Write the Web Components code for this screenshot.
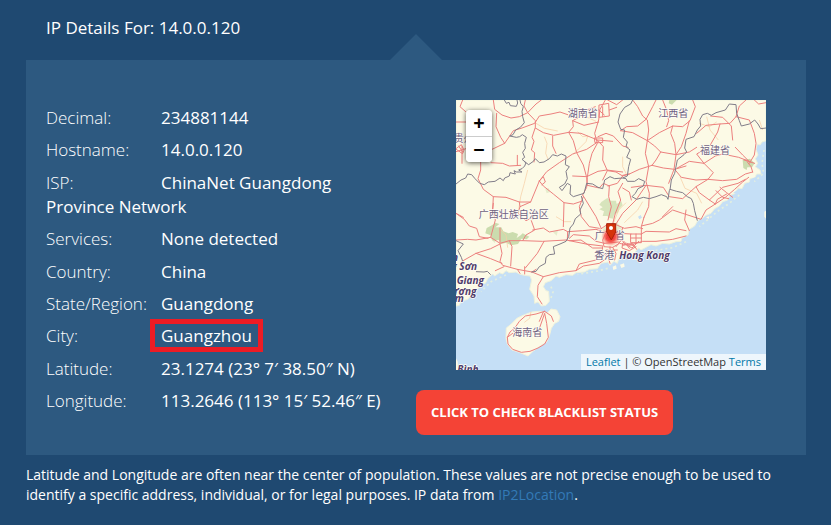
<!DOCTYPE html>
<html lang="en">
<head>
<meta charset="utf-8">
<title>IP Details</title>
<style>
  body { margin: 0; min-height: 100vh; background: #1f4971; color: #fff; font: 17px/24px "Open Sans", "Noto Sans", "Noto Sans CJK SC", sans-serif; }
</style>
</head>
<body>
<ip-page>
  <span slot="title">IP Details For: 14.0.0.120</span>
  <ip-fields slot="fields">
    <ip-field label="Decimal:">234881144</ip-field>
    <ip-field label="Hostname:">14.0.0.120</ip-field>
    <ip-field label="ISP:">ChinaNet Guangdong Province Network</ip-field>
    <ip-field label="Services:">None detected</ip-field>
    <ip-field label="Country:">China</ip-field>
    <ip-field label="State/Region:">Guangdong</ip-field>
    <ip-field label="City:" marked>Guangzhou</ip-field>
    <ip-field label="Latitude:">23.1274 (23° 7′ 38.50″ N)</ip-field>
    <ip-field label="Longitude:">113.2646 (113° 15′ 52.46″ E)</ip-field>
  </ip-fields>
  <ip-map slot="map"></ip-map>
  <blacklist-button slot="action">CLICK TO CHECK BLACKLIST STATUS</blacklist-button>
  <ip-note slot="note"></ip-note>
</ip-page>

<template id="ip-page">
  <style>
    :host { display: block; padding: 16px 25px 20px 26px; }
    h1 { margin: 0 20px 20px; font-size: 17px; line-height: 24px; font-weight: 400; }
    main { position: relative; display: grid; grid-template-columns: 1fr 1fr; padding: 40px 20px 20px; background: #2d5980; }
    main::before { content: ""; position: absolute; bottom: 100%; left: 50%; margin-left: -26px; border: 26px solid transparent; border-top: 0; border-bottom-color: #2d5980; }
    .right { display: flex; flex-direction: column; align-items: flex-start; gap: 20px; }
    ::slotted(ip-map) { align-self: stretch; margin: 0 20px 0 40px; }
  </style>
  <h1><slot name="title"></slot></h1>
  <main>
    <slot name="fields"></slot>
    <div class="right"><slot name="map"></slot><slot name="action"></slot></div>
  </main>
  <slot name="note"></slot>
</template>

<template id="ip-fields">
  <style>:host { display: flex; flex-direction: column; justify-content: space-between; padding: 6px 20px 22px 0; }</style>
  <slot></slot>
</template>

<template id="ip-field">
  <style>
    :host { display: block; }
    .label { display: inline-block; width: 115px; font-weight: 300; }
    :host([marked]) .value { margin: 0 -6px; padding: 0 6px; outline: 5px solid #ed1c24; }
  </style>
  <span class="label"></span><span class="value"><slot></slot></span>
</template>

<template id="blacklist-button">
  <style>
    :host { display: block; }
    button { padding: 12px 15px; border: 0; border-radius: 8px; background: #f44336; color: #fff; font: 700 13px/21px "Open Sans", sans-serif; cursor: pointer; }
  </style>
  <button type="button"><slot></slot></button>
</template>

<template id="ip-note">
  <style>
    :host { display: block; padding-top: 10px; font-size: 14px; line-height: 20px; }
    p { margin: 0; }
    a { color: #337ab7; text-decoration: none; }
  </style>
  <p>Latitude and Longitude are often near the center of population. These values are not precise enough to be used to identify a specific address, individual, or for legal purposes. IP data from <a href="#">IP2Location</a>.</p>
</template>

<template id="ip-map">
  <style>
    :host { display: block; position: relative; aspect-ratio: 31 / 27; overflow: hidden; background: #c5dff6; color: #333; }
    svg { display: block; width: 100%; height: 100%; }
    .zoom { position: absolute; left: 10px; top: 10px; display: flex; flex-direction: column; width: 26px; border-radius: 4px; overflow: hidden; box-shadow: 0 1px 5px rgba(0,0,0,.65); }
    .zoom button { height: 26px; padding: 0; border: 0; background: #fff; color: #000; font: 700 20px/26px "Open Sans", sans-serif; cursor: pointer; }
    .zoom button + button { border-top: 1px solid #ccc; line-height: 24px; }
    .credit { position: absolute; right: 0; bottom: 0; padding: 0 5px; background: rgba(255,255,255,.7); font-size: 11px; line-height: 16px; white-space: nowrap; }
    a { color: #0078a8; text-decoration: none; }
  </style>
  <svg viewBox="0 0 930 810" role="img" aria-label="Map of southern China with a pin on Guangzhou">
    <path fill="#fcfae6" stroke="#eef2dc" stroke-width="3" d="M0 0H930V122L918 126 912 135 904 132 900 148 906 165 898 176 905 190 898 200 912 210 915 222 902 222 896 234 882 236 880 246 866 250 858 266 846 264 838 280 822 286 815 300 800 305 790 318 776 326 765 340 750 346 740 354 725 362 716 378 700 388 696 405 678 414 675 424 660 425 640 432 620 430 600 438 585 434 570 442 555 450 548 444 532 462 520 458 510 470 500 462 488 478 484 490 474 484 462 496 456 486 435 490 424 506 400 508 385 516 360 518 350 526 330 524 310 532 300 528 285 542 268 548 262 560 270 572 278 574 280 604 270 616 256 618 246 606 236 610 234 588 221 568 227 540 222 528 205 526 190 522 180 516 160 518 150 512 140 522 130 518 116 528 110 522 95 536 88 550 75 552 60 575 50 580 35 598 15 604 10 616 0 618Z"/>
    <path fill="#fcfae6" stroke="#f2f3dd" stroke-width="3" d="M285 627L302 630 312 650 308 664 296 670 286 685 280 708 272 726 250 740 232 753 216 768 190 757 168 750 154 732 150 715 151 684 166 672 184 654 206 644 228 636 250 634 275 638Z"/>
    <path fill="#fcfae6" d="M0 775l5 10 1 25H0zM470 500l10-4 2 10-10 4zM492 494l12-4 2 10-10 4zM750 352l10-3-2 8zM925 335l5-3v24l-5-6z"/>
    <path fill="none" stroke="#e3efdf" stroke-width="5" stroke-dasharray="6 9" d="M924 150l-6 40 5 30-28 25M850 285l-30 25-30 20-60 50M690 425l-40 18-60 10-50 12M455 505l-30 8-60 10M285 560l6 16-6 18M150 525l-45 20-30 30"/>
    <g fill="#c5dff6"><path d="M546 350l8-5 4 8-8 5zM885 236l18-6-5 8zM832 278l16-10-6 14z"/></g>
    <g fill="#cbdcae">
      <path opacity=".75" d="M436 306l18-12 10 8 16 0 2 10 14-8 4 12-10 10-4 12-12 6-2 12-12-2-6-6-14 0 4-14-14-6 10-6-10-8z"/>
      <path d="M860 180l22-4 14 14-8 12-14 0-2 8-10-6z"/>
      <path d="M92 384l16-8 10-8 12 4-12 10 18 0 6 12 16 6 12-4 16 6-4 12 12-8 6-6 20 10-8 8-16-2-10 16-20 4-16-8-14 4-8-12-18 2-6-16-16-6z"/>
      <path d="M640 0l22 0-14 14-10-4z"/>
      <path opacity=".45" d="M268 268l10-4 4 12-10 4zM440 388l14-16 30-4 14 20-6 12h-50zM100 410l24 5-8 14zM290 395l16-4-4 16z"/>
    </g>
    <g fill="none" stroke="#f7cda4" stroke-width="3" stroke-linejoin="round" opacity=".7">
      <path d="M215 210L205 250 194 290 188 330M365 95L380 110 395 108 390 125 365 150 352 162M240 70l25 15 40 8M300 350l25 15 20 0M470 375L488 330 510 308M560 305L545 330 505 368M752 50l10 40 25 30M672 230l15 35 35 15 15 30M130 385l20 20 5 38M225 635l-4 20-16 12M265 110l8 20-4 30 8 20M370 20l20 30 30 14M500 170l0 30 12 24M730 70l30 10 22-14M910 60l10 30"/>
    </g>
    <g fill="none" stroke="#ec807e" stroke-width="3" stroke-linejoin="round" stroke-linecap="round">
      <path d="M112 0L116 28 138 45 165 54 190 50 215 38 240 12 256 0M122 40L120 80 134 112 146 130 172 92 198 84 236 70 250 48 285 42 312 36 335 44M146 130L104 150M208 0L204 18 215 38 238 62 238 82 228 112 234 124 226 150 236 158 234 186M238 84L262 98 293 106 338 97 375 100 425 120 470 124M290 108L290 138 300 160M338 97L352 122 362 158 382 195 392 232 394 256M338 97L352 80 350 62 372 50 392 30 418 20M350 62L384 76 428 66M20 0L12 20 30 36M0 66H30M18 140V190M0 155L30 146M74 186V210L66 236 82 268 112 290 150 292 190 306 224 306 250 243 272 215 310 188 350 162 392 148 425 126M250 243L262 258 292 282 324 308 322 380M250 243L262 230 268 246 258 254M112 290L110 330 118 360 104 412M112 310L108 345M190 306L192 320 224 306M192 320L186 340 210 362 234 350M324 308L352 312 376 304M350 228L392 230 426 214 452 210 500 216M105 188L140 190 160 198 194 196M184 166V194M0 340L25 358 40 378 62 385 70 410 96 415"/>
      <path d="M448 0L432 28 428 60 416 100 424 130 408 160 400 190 394 232 392 262 380 285M424 120L442 140 440 180 454 212 440 240M426 110L450 100 472 108 500 138 516 142M416 114h24v14h-22zM430 15L458 10 460 48 430 52zM440 20v30M455 0L482 14 500 0M460 30L482 22M428 30L445 45M382 290L370 320 376 350 400 380 430 385M394 256L430 264 442 250 460 258 458 290 466 320 456 360M500 250L486 275 494 300 478 340 470 372M500 228L484 250 456 258M500 264L520 276 526 300"/>
      <path d="M494 92L530 98 574 122 610 98 650 78 680 80 702 62 718 20 710 0M494 92L512 80 545 78 570 58 590 20 600 0M530 0L545 20 560 48 574 60 578 90 574 122 568 160 578 200 570 245 580 280 578 320 564 352M574 122L596 138 614 156 660 164 700 156 722 142M614 156L600 180 588 196 550 208 520 222 500 226M588 196L622 204 656 208 690 198M650 78L644 100 656 130 660 164 654 208 638 250M620 0L632 30 638 62 632 80M700 62L690 100 676 140 660 164M520 222L500 228 480 216 455 212M656 208L676 232 720 240 756 238 772 218 744 190 700 184 664 204M722 100L750 76 790 72 822 70 840 50 850 18 870 0M744 190L722 162 760 140 785 96 792 72M764 48L800 52 826 78 830 120M744 190L778 168 800 162 848 172 885 186M756 238L800 242 842 238 868 222 890 216M756 238L720 260 730 278 760 300 778 312 808 292 836 268 860 246 878 232M760 300L800 262 846 250 868 238M778 312L784 298 812 282M720 260L680 296 640 290 622 262 570 256 526 262M840 50L880 60 895 100 900 130 895 165 880 190M895 0L908 12 930 8M838 142L860 165 880 185M890 216L885 200 874 186M864 180L896 190M778 312L750 330 735 358 680 340 650 330 610 360 590 370 556 378M690 330L686 360 700 392M650 320L620 350M780 272L800 292 818 296M792 262L812 278 830 292"/>
      <path d="M0 420L35 418 60 420 104 412 132 430 160 422 200 422 260 424 330 420 390 432 440 438M18 484L60 460 104 446 132 432 138 460 132 484 140 496 184 508 228 516 262 530 310 518 360 512 382 498 430 490 450 476M60 460L104 476 138 490M160 422L168 440 164 498M264 424L244 460 208 504M132 384V430M184 508L192 520M206 500V522M228 516L240 508M262 530L246 556 244 590 258 612M230 390L262 384 280 396 322 388 335 395 334 418M226 362L236 390 210 405 200 422M335 395L380 392 420 388 450 398M340 415L352 404 400 408 420 424 446 430M340 422L375 420 410 444 440 444M360 512L370 492 420 480 440 465M0 340L22 352M118 512L144 500"/>
      <path d="M266 634L240 642 208 648 190 664 178 682 162 696 154 712 156 732 170 748 196 757 222 754 246 744 266 732 277 712 272 670 266 640 252 680M266 634L286 648 292 664M262 636L250 664M154 712L170 700"/>
      <path d="M450 398L440 420 444 440 470 442 490 430 520 436 560 424 600 424 650 418 690 408M430 390L450 376 480 374 505 385 540 380 560 386M500 384L492 408 504 430 528 444 548 424M525 402H556V428H525zM540 402V428M525 414H556M490 400L525 402M556 402L570 394 640 396 660 386 690 392M440 440L438 458 456 470 462 490M470 442L480 460 476 480M500 430L498 444 520 452 540 440M505 425L520 445M512 430L535 438M446 430L490 426M450 450L484 450M462 440V468M480 440L500 416M500 436L530 430 542 448M570 256L540 300 500 340 480 372M564 352L556 380 556 402M380 285L420 350 436 386"/>
      <path d="M0 146L16 134 24 150 20 160zM8 138L20 156"/>
    </g>
    <g fill="none" stroke="#817d89" stroke-width="3" stroke-linejoin="round">
      <path d="M145 0l6 10 8-3 4 10 18 2 4-10-2-9M192 0l2 10 8 10-4 14 2 16 5 18-12 14-14 8-8 14-10 4 20 4 10-2 8-6 12 8-5 18 2 15-8 12 6 15-8 6 12 10-4 10-8 8-10 4 10 6-16 0-8-4 4 10-16-4-2 10-14 6-4 8-10-8-15 10-20 2-12 8-14-4-14-14-10-12-12-2-6 12-14 6-15 12"/>
      <path d="M204 184L218 194 232 184 238 176 250 188 264 186 280 176 290 164 304 168 316 162 330 168 328 194 340 200 330 214 334 236 326 252 310 262 318 272 334 250 344 256 342 282 352 290 384 280 392 250 410 252 426 262 440 266 446 240 462 230 476 236 500 234"/>
      <path d="M376 288L382 310 372 330 374 342 358 356 352 372 342 384 338 410 330 424 312 432 292 440 296 462 280 464 270 472 268 490 250 500 240 514 226 516"/>
      <path d="M530 0L524 12 506 22 492 42 486 66 494 88 506 90 502 112 514 126 510 140 522 150 512 172 524 178 518 200 514 228 500 234 510 236 514 244 536 244 548 236 566 244 562 258 546 266 538 280 528 290 542 298 562 292 580 296 600 290 616 284 632 290 636 298 640 272 642 268"/>
      <path d="M642 270L646 240 656 220 664 180 684 164 692 156 686 144 690 118 714 110 724 90 734 78 732 58 740 44 754 40 766 46 780 38 808 30 820 12 840 14 842 40 850 62 856 78 880 72 896 60 906 72 914 86 930 84M642 268L662 274 680 278 694 290 706 296 712 310 716 332 724 362"/>
      <path d="M0 422L22 432 6 452 16 472 22 490M60 515L84 516 94 514 104 524"/>
    </g>
    <defs><radialGradient id="heat"><stop stop-color="#f01e1e"/><stop offset=".5" stop-color="#f4403a" stop-opacity=".9"/><stop offset="1" stop-color="#f77a70" stop-opacity="0"/></radialGradient></defs>
    <g fill="#6f6282" stroke="#fffdf5" stroke-width="4" stroke-linejoin="round" paint-order="stroke" font-family="Noto Sans CJK SC, sans-serif" font-size="30">
      <text x="335" y="51">湖南省</text><text x="607" y="51">江西省</text><text x="732" y="163">福建省</text>
      <text x="-7" y="126">贵州</text><text x="68" y="355">广西壮族自治区</text><text x="169" y="707">海南省</text>
      <text x="416" y="418">广东省</text><text x="415" y="476">香港</text>
    </g>
    <circle cx="464" cy="410" r="29" fill="url(#heat)"/>
    <g fill="#4f3b6b" stroke="#fffdf5" stroke-width="4" stroke-linejoin="round" paint-order="stroke" font-family="Open Sans, sans-serif" font-size="30" font-weight="700" font-style="italic">
      <text x="490" y="476">Hong Kong</text><text x="-12" y="482">n</text><text x="-14" y="510">g Sơn</text><text x="2" y="552">Giang</text><text x="-14" y="584">ương</text><text x="-4" y="607">m</text><text x="4" y="820">Bình</text>
    </g>
    <path fill="#d53309" stroke="#a8200b" stroke-width="3" d="M452 371h27v25l-13 24-14-24z"/>
    <circle cx="465" cy="384" r="6" fill="#fff"/>
  </svg>
  <div class="zoom"><button type="button" aria-label="Zoom in">+</button><button type="button" aria-label="Zoom out">−</button></div>
  <div class="credit"><a href="#">Leaflet</a> | © OpenStreetMap <a href="#">Terms</a></div>
</template>

<script>
  class TemplateElement extends HTMLElement {
    constructor() {
      super();
      this.attachShadow({ mode: "open" }).append(document.getElementById(this.localName).content.cloneNode(true));
    }
  }
  for (const name of ["ip-page", "ip-fields", "ip-map", "blacklist-button", "ip-note"])
    customElements.define(name, class extends TemplateElement {});
  customElements.define("ip-field", class extends TemplateElement {
    connectedCallback() { this.shadowRoot.querySelector(".label").textContent = this.getAttribute("label"); }
  });
</script>
</body>
</html>
